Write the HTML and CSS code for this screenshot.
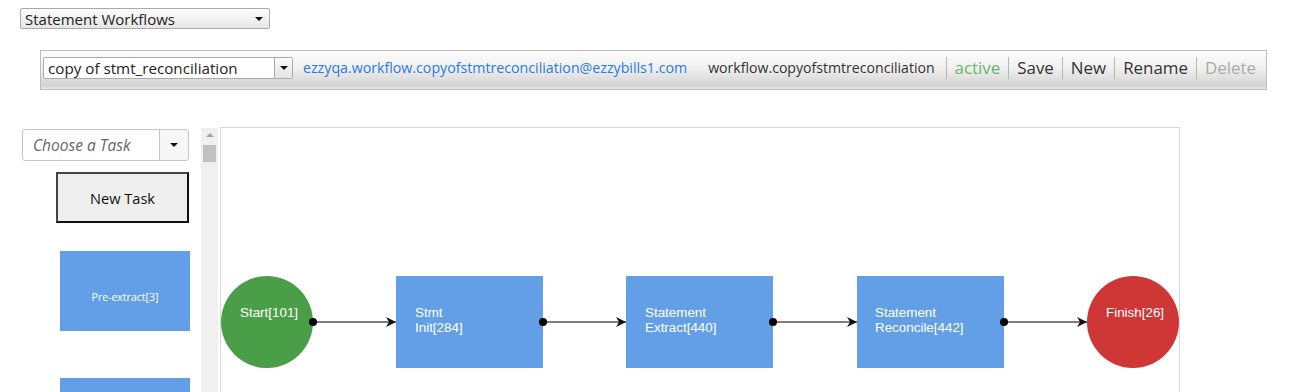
FILE: index.html
```html
<!DOCTYPE html>
<html lang="en">
<head>
    <meta charset="UTF-8">
    <title>Statement Workflows</title>
    <link rel="stylesheet" href="styles.css">
</head>
<body>
<div class="top">
    <div class="dropdown wf-select">
        <span>Statement Workflows</span>
        <span class="caret"></span>
    </div>
</div>

<div class="toolbar">
    <div class="dropdown name-select">
        <span>copy of stmt_reconciliation</span>
        <span class="caret-box"><span class="caret"></span></span>
    </div>
    <a class="email" href="#">ezzyqa.workflow.copyofstmtreconciliation@ezzybills1.com</a>
    <span class="wf-id">workflow.copyofstmtreconciliation</span>
    <div class="actions">
        <span class="act status">active</span>
        <span class="act">Save</span>
        <span class="act">New</span>
        <span class="act">Rename</span>
        <span class="act disabled">Delete</span>
    </div>
</div>

<div class="main">
    <div class="sidebar">
        <div class="combo">
            <span class="placeholder">Choose a Task</span>
            <span class="combo-btn"><span class="caret"></span></span>
        </div>
        <button class="new-task">New Task</button>
        <div class="task">Pre-extract[3]</div>
        <div class="task"></div>
    </div>
    <div class="scrollbar">
        <div class="arrow-up"></div>
        <div class="thumb"></div>
    </div>
    <div class="canvas">
        <svg width="960" height="270" viewBox="220 127 960 270">
            <defs>
                <marker id="arr" viewBox="0 0 10 10" refX="10" refY="5" markerWidth="10" markerHeight="10" orient="auto" markerUnits="userSpaceOnUse">
                    <path d="M0 0 L10 5 L0 10 L3 5 Z" fill="#111"/>
                </marker>
            </defs>
            <g class="edges">
                <line x1="313" y1="322" x2="396" y2="322" marker-end="url(#arr)"/>
                <line x1="543" y1="322" x2="626" y2="322" marker-end="url(#arr)"/>
                <line x1="773" y1="322" x2="857" y2="322" marker-end="url(#arr)"/>
                <line x1="1004" y1="322" x2="1087" y2="322" marker-end="url(#arr)"/>
            </g>
            <circle cx="267" cy="322" r="46" fill="#4a9e48"/>
            <rect x="396" y="276" width="147" height="92" fill="#629fe6"/>
            <rect x="626" y="276" width="147" height="92" fill="#629fe6"/>
            <rect x="857" y="276" width="147" height="92" fill="#629fe6"/>
            <ellipse cx="1133" cy="322" rx="46" ry="46" fill="#cf3636"/>
            <g class="dots">
                <circle cx="313" cy="322" r="4"/>
                <circle cx="543" cy="322" r="4"/>
                <circle cx="773" cy="322" r="4"/>
                <circle cx="1004" cy="322" r="4"/>
            </g>
            <g class="labels">
                <text x="240" y="317">Start[101]</text>
                <text x="415" y="317">Stmt</text>
                <text x="415" y="332">Init[284]</text>
                <text x="645" y="317">Statement</text>
                <text x="645" y="332">Extract[440]</text>
                <text x="875" y="317">Statement</text>
                <text x="875" y="332">Reconcile[442]</text>
                <text x="1106" y="317">Finish[26]</text>
            </g>
        </svg>
    </div>
</div>
</body>
</html>
```

FILE: styles.css
```css
body { margin: 0; background: #fff; font-family: "Open Sans", "Noto Sans", sans-serif; color: #222; overflow: hidden; }
.top { padding: 8px 0 0 20px; height: 50px; box-sizing: border-box; }
.dropdown { display: flex; align-items: center; justify-content: space-between; box-sizing: border-box; border: 1px solid #a9a9a9; border-radius: 2px; background: linear-gradient(#fdfdfd, #e6e6e6); font-size: 15px; }
.wf-select { width: 250px; height: 21px; padding: 0 6px 0 4px; }
.caret { width: 0; height: 0; border-left: 4px solid transparent; border-right: 4px solid transparent; border-top: 4px solid #111; }
.toolbar { margin-left: 40px; width: 1227px; height: 40px; box-sizing: border-box; border: 1px solid #bdbdbd; background: linear-gradient(#fcfcfc 0%, #f0f0f0 45%, #d3d3d3 92%, #e8e8e8 100%); display: flex; align-items: flex-start; padding: 6px 2px 0 2px; }
.name-select { width: 250px; height: 22px; background: #fff; border-color: #aaa; padding: 0 0 0 4px; }
.name-select > span:first-child { font-size: 15.2px; }
.caret-box { width: 17px; height: 20px; border-left: 1px solid #aaa; background: linear-gradient(#fafafa, #e4e4e4); display: flex; align-items: center; justify-content: center; }
.email { color: #2a7ae2; text-decoration: none; font-size: 14.2px; margin-left: 10px; line-height: 22px; }
.wf-id { color: #333; font-size: 14.1px; margin-left: 21px; line-height: 22px; }
.actions { display: flex; margin-left: 11px; }
.act { font-size: 16.9px; color: #333; padding: 0 8px; line-height: 22px; border-left: 1px solid #b5b5b5; }
.act.status { color: #6ab56a; }
.act.disabled { color: #aaa; padding-right: 0; }
.main { display: flex; margin-top: 37px; height: 265px; overflow: hidden; }
.sidebar { width: 201px; display: flex; flex-direction: column; align-items: flex-start; padding: 2px 0 0 22px; box-sizing: border-box; }
.sidebar > * { flex-shrink: 0; }
.combo { width: 167px; height: 32px; box-sizing: border-box; border: 1px solid #c4c4c4; border-radius: 3px; display: flex; align-items: center; background: #fff; }
.placeholder { flex: 1; font-style: italic; color: #666; font-size: 15.5px; padding-left: 10px; }
.combo-btn { width: 28px; height: 30px; border-left: 1px solid #c4c4c4; background: #f7f7f7; display: flex; align-items: center; justify-content: center; border-radius: 0 3px 3px 0; }
.new-task { margin: 11px 0 0 34px; width: 133px; height: 51px; border: 2px solid; border-color: #444 #111 #111 #444; background: #efefef; font-family: inherit; font-size: 14.6px; color: #111; }
.task { margin: 28px 0 0 38px; width: 130px; height: 80px; box-sizing: border-box; padding-top: 12px; background: #629fe6; color: #fff; font-size: 10.5px; display: flex; align-items: center; justify-content: center; }
.task + .task { margin-top: 47px; }
.scrollbar { width: 17px; height: 270px; background: #f0f0f0; margin-top: 1px; }
.arrow-up { width: 0; height: 0; margin: 5px auto 0; border-left: 4px solid transparent; border-right: 4px solid transparent; border-bottom: 4px solid #a3a3a3; }
.thumb { width: 13px; height: 17px; margin: 8px auto 0; background: #c1c1c1; }
.canvas { margin-left: 2px; width: 960px; height: 270px; box-sizing: border-box; border: 1px solid #d7d7d7; overflow: hidden; }
.canvas svg { display: block; margin: -1px 0 0 -1px; }
.edges line { stroke: #555; stroke-width: 1.5; }
.dots circle { fill: #000; }
.labels text { font-family: "Liberation Sans", Arial, sans-serif; font-size: 13.4px; fill: #fff; }
```
